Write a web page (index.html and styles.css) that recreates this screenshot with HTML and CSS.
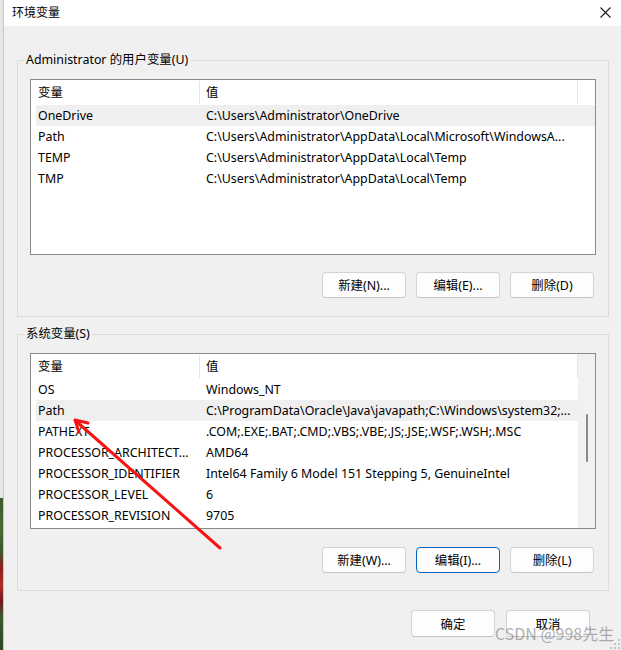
FILE: index.html
```html
<!DOCTYPE html>
<html lang="zh-CN">
<head>
<meta charset="utf-8">
<title>环境变量</title>
<link rel="stylesheet" href="styles.css">
</head>
<body>
<div class="screen">
  <div class="desk">
    <div class="desk-top"></div>
    <div class="desk-img"></div>
  </div>
  <div class="window">
    <div class="titlebar">
      <span class="title">环境变量</span>
      <svg class="close" width="11" height="11" viewBox="0 0 11 11"><path d="M0.5 0.5 L10.5 10.5 M10.5 0.5 L0.5 10.5" stroke="#1a1a1a" stroke-width="1.1" fill="none"/></svg>
    </div>
    <div class="content">
      <fieldset class="group group-user">
        <legend>Administrator 的用户变量(U)</legend>
        <div class="list">
          <div class="list-body">
            <div class="row head"><div class="c1">变量</div><div class="c2">值</div></div>
            <div class="row sel"><div class="c1">OneDrive</div><div class="c2">C:\Users\Administrator\OneDrive</div></div>
            <div class="row"><div class="c1">Path</div><div class="c2">C:\Users\Administrator\AppData\Local\Microsoft\WindowsA...</div></div>
            <div class="row"><div class="c1">TEMP</div><div class="c2">C:\Users\Administrator\AppData\Local\Temp</div></div>
            <div class="row"><div class="c1">TMP</div><div class="c2">C:\Users\Administrator\AppData\Local\Temp</div></div>
          </div>
        </div>
        <div class="btns">
          <button class="btn">新建(N)...</button>
          <button class="btn">编辑(E)...</button>
          <button class="btn">删除(D)</button>
        </div>
      </fieldset>
      <fieldset class="group group-sys">
        <legend>系统变量(S)</legend>
        <div class="list">
          <div class="list-body">
            <div class="row head"><div class="c1">变量</div><div class="c2">值</div></div>
            <div class="row"><div class="c1">OS</div><div class="c2">Windows_NT</div></div>
            <div class="row sel"><div class="c1">Path</div><div class="c2">C:\ProgramData\Oracle\Java\javapath;C:\Windows\system32;...</div></div>
            <div class="row"><div class="c1">PATHEXT</div><div class="c2">.COM;.EXE;.BAT;.CMD;.VBS;.VBE;.JS;.JSE;.WSF;.WSH;.MSC</div></div>
            <div class="row"><div class="c1">PROCESSOR_ARCHITECT...</div><div class="c2">AMD64</div></div>
            <div class="row"><div class="c1">PROCESSOR_IDENTIFIER</div><div class="c2">Intel64 Family 6 Model 151 Stepping 5, GenuineIntel</div></div>
            <div class="row"><div class="c1">PROCESSOR_LEVEL</div><div class="c2">6</div></div>
            <div class="row"><div class="c1">PROCESSOR_REVISION</div><div class="c2">9705</div></div>
          </div>
          <div class="scroll"><div class="thumb"></div></div>
        </div>
        <div class="btns">
          <button class="btn">新建(W)...</button>
          <button class="btn btn-focus">编辑(I)...</button>
          <button class="btn">删除(L)</button>
        </div>
      </fieldset>
      <div class="footer">
        <button class="btn btn-lg">确定</button>
        <button class="btn btn-lg">取消</button>
      </div>
    </div>
  </div>
  <div class="watermark">CSDN @998先生</div>
  <svg class="grip" width="12" height="12" viewBox="0 0 12 12">
    <rect x="9" y="1" width="2" height="2" fill="#c4c4c4"/>
    <rect x="9" y="5" width="2" height="2" fill="#c4c4c4"/>
    <rect x="5" y="5" width="2" height="2" fill="#c4c4c4"/>
    <rect x="9" y="9" width="2" height="2" fill="#c4c4c4"/>
    <rect x="5" y="9" width="2" height="2" fill="#c4c4c4"/>
    <rect x="1" y="9" width="2" height="2" fill="#c4c4c4"/>
  </svg>
  <svg class="arrow" width="621" height="650" viewBox="0 0 621 650">
    <path d="M220 548 L77 422" stroke="#f41414" stroke-width="3" stroke-linecap="round" fill="none"/>
    <path d="M88 423 L75 420 L79 432" stroke="#f41414" stroke-width="3" stroke-linecap="round" stroke-linejoin="round" fill="none"/>
  </svg>
</div>
</body>
</html>
```

FILE: styles.css
```css
* {
  box-sizing: border-box;
}

html,
body {
  margin: 0;
  padding: 0;
}

body {
  width: 621px;
  height: 650px;
  overflow: hidden;
  font-family: "Noto Sans", "Noto Sans CJK SC", sans-serif;
  font-size: 12.4px;
  color: #000;
  background: #f0f0f0;
}

.screen {
  position: relative;
  display: flex;
  width: 621px;
  height: 650px;
}

.desk {
  width: 5px;
  display: flex;
  flex-direction: column;
  background: #e6e6e6;
  border-right: 1px solid #c6c6c6;
}

.desk-top {
  flex: 1;
}

.desk-img {
  height: 152px;
  background: linear-gradient(180deg, #3d5a2c 0%, #4a6a33 20%, #3b5a2a 35%, #8c1e1e 45%, #b02a2a 58%, #6e1a1a 68%, #3d5a2c 78%, #2e4a22 100%);
}

.window {
  flex: 1;
  display: flex;
  flex-direction: column;
  background: #f0f0f0;
}

.titlebar {
  height: 26px;
  background: #fff;
  display: flex;
  align-items: center;
  justify-content: space-between;
  padding: 0 10px 2px 8px;
}

.title {
  font-family: "Noto Sans CJK SC", sans-serif;
  font-size: 12px;
  line-height: 16px;
}

.close {
  display: block;
}

.content {
  display: flex;
  flex-direction: column;
  padding: 26px 12px 0 13px;
}

.group {
  margin: 0;
  min-width: 0;
  border: 1px solid #dcdcdc;
  padding: 11px 12px 17px;
}

.group legend {
  margin-left: -6px;
  padding: 0 2px;
  font-size: 12.4px;
  line-height: 16px;
}

.group-user {
  padding-bottom: 18px;
}

.group-sys {
  margin-top: 9px;
}

.list {
  height: 176px;
  border: 1px solid #878a90;
  background: #fff;
  display: flex;
}

.list-body {
  flex: 1;
  padding-left: 5px;
  min-width: 0;
}

.row {
  display: grid;
  grid-template-columns: 163px 379px;
  height: 21px;
  line-height: 21px;
  white-space: nowrap;
}

.row > div {
  overflow: hidden;
}

.row .c1 {
  padding-left: 2px;
}

.row .c2 {
  padding-left: 7px;
}

.head {
  height: 25px;
}

.head .c1,
.head .c2 {
  margin: 1px 0;
  height: 23px;
  line-height: 23px;
}

.head .c2 {
  border-left: 1px solid #e5e5e5;
  border-right: 1px solid #e5e5e5;
  padding-left: 6px;
}

.sel {
  background: #efefef;
}

.scroll {
  width: 17px;
  background: #f1f1f1;
  display: flex;
  justify-content: center;
  padding-top: 60px;
}

.thumb {
  width: 2px;
  height: 48px;
  background: #8a8a8a;
  border-radius: 1px;
}

.btns {
  display: flex;
  justify-content: flex-end;
  gap: 10px;
  margin-top: 17px;
  padding-right: 2px;
}

.group-sys .btns {
  margin-top: 18px;
}

.btn {
  width: 84px;
  height: 26px;
  margin: 0;
  padding: 0;
  border: 1px solid #d3d3d3;
  border-bottom-color: #c4c4c4;
  border-radius: 4px;
  background: #fdfdfd;
  font-family: "Noto Sans", "Noto Sans CJK SC", sans-serif;
  font-size: 12.4px;
  color: #000;
  display: flex;
  align-items: center;
  justify-content: center;
}

.btn-focus {
  border-color: #0067c0;
}

.btn-lg {
  height: 27px;
}

.footer {
  display: flex;
  justify-content: flex-end;
  gap: 11px;
  margin-top: 19px;
  padding-right: 19px;
}

.watermark {
  position: absolute;
  left: 495px;
  top: 622px;
  font-family: "Noto Sans CJK SC", sans-serif;
  font-size: 16px;
  line-height: 22px;
  color: rgba(120, 120, 120, 0.6);
  white-space: nowrap;
}

.grip {
  position: absolute;
  right: 0;
  bottom: 0;
}

.arrow {
  position: absolute;
  left: 0;
  top: 0;
  pointer-events: none;
}
```
